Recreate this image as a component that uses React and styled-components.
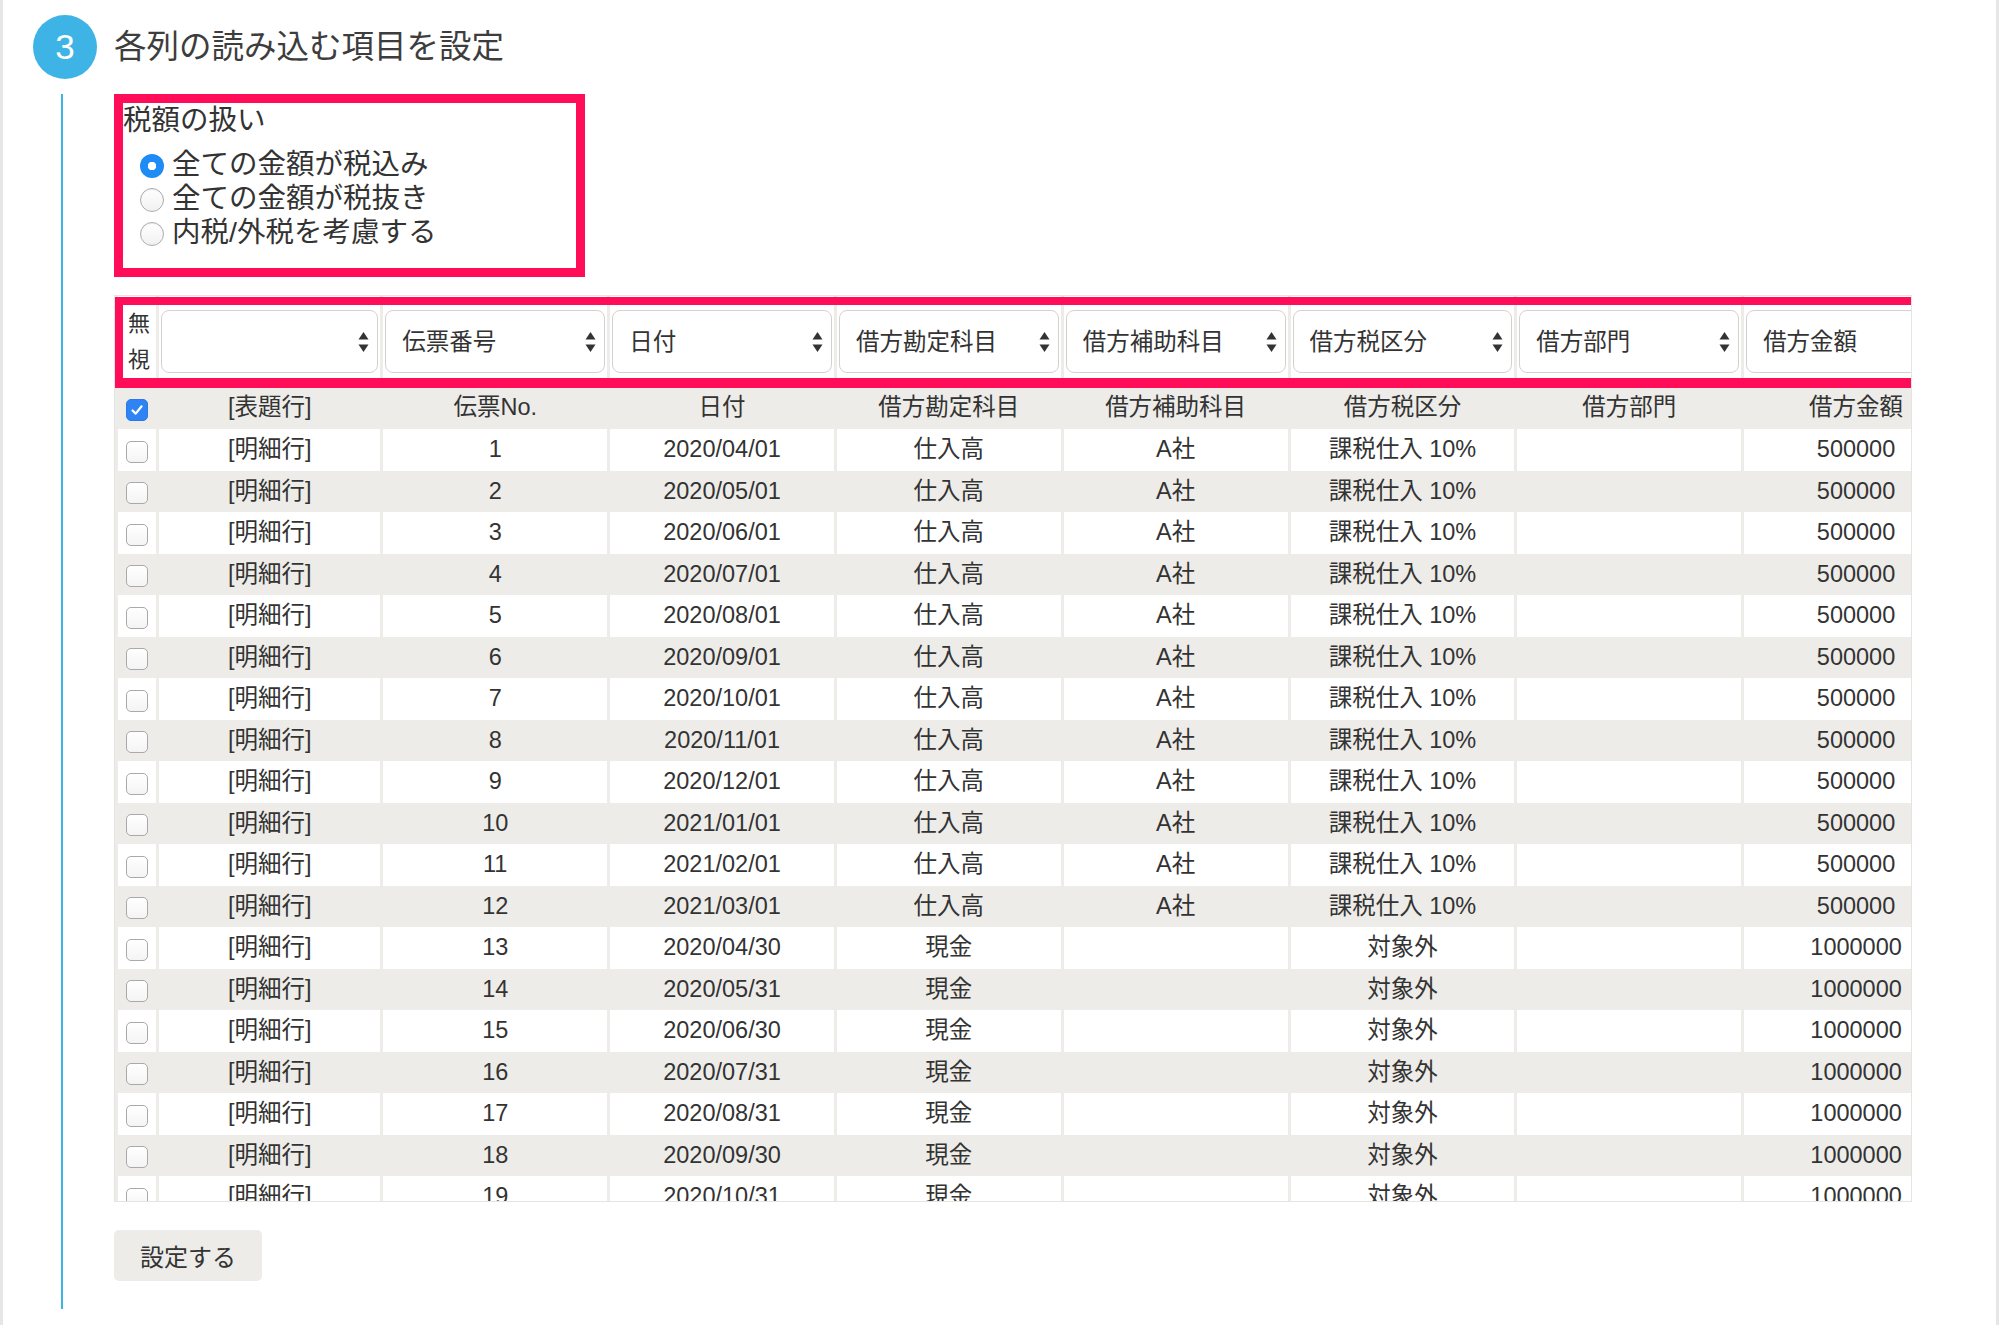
import React from 'react'
import styled, { createGlobalStyle } from 'styled-components'

const FONT = `"Liberation Sans", "Noto Sans CJK JP", sans-serif`

const GlobalStyle = createGlobalStyle`
	html, body {
		margin: 0;
		padding: 0;
		background: #fff;
	}
	body {
		font-family: ${FONT};
		color: #333;
	}
	* {
		box-sizing: border-box;
	}
`

// data
const fields = ['', '伝票番号', '日付', '借方勘定科目', '借方補助科目', '借方税区分', '借方部門', '借方金額']
const headers = ['[表題行]', '伝票No.', '日付', '借方勘定科目', '借方補助科目', '借方税区分', '借方部門', '借方金額']

const purchaseDates = [
	'2020/04/01', '2020/05/01', '2020/06/01', '2020/07/01', '2020/08/01', '2020/09/01',
	'2020/10/01', '2020/11/01', '2020/12/01', '2021/01/01', '2021/02/01', '2021/03/01'
]
const cashDates = ['2020/04/30', '2020/05/31', '2020/06/30', '2020/07/31', '2020/08/31', '2020/09/30', '2020/10/31']

const rows = [
	...purchaseDates.map((date, i) => ({
		no: i + 1, date, account: '仕入高', sub: 'A社', tax: '課税仕入 10%', dept: '', amount: '500000'
	})),
	...cashDates.map((date, i) => ({
		no: i + 13, date, account: '現金', sub: '', tax: '対象外', dept: '', amount: '1000000'
	}))
]

const taxOptions = ['全ての金額が税込み', '全ての金額が税抜き', '内税/外税を考慮する']

const Checkbox = ({ checked }) => (
	<CheckBox role='checkbox' aria-checked={checked} $checked={checked}>
		{checked && (
			<svg width='16' height='16' viewBox='0 0 16 16'>
				<path d='M3.5 8.5 L6.7 11.6 L12.6 4.3' fill='none' stroke='#fff' strokeWidth='2.2' strokeLinecap='round' strokeLinejoin='round'/>
			</svg>
		)}
	</CheckBox>
)

const FieldSelect = ({ value }) => (
	<SelectWrap>
		<Select defaultValue={value}>
			{fields.map(f => <option key={f} value={f}>{f}</option>)}
		</Select>
		<Arrow width='11' height='22' viewBox='0 0 11 22'>
			<path d='M5.5 1 L10.5 8.5 L0.5 8.5 Z' fill='#333'/>
			<path d='M5.5 21 L10.5 13.5 L0.5 13.5 Z' fill='#333'/>
		</Arrow>
	</SelectWrap>
)

export default function App () {
	return (
		<Page>
			<GlobalStyle/>
			<StepHeader>
				<StepNumber>3</StepNumber>
				<StepTitle>各列の読み込む項目を設定</StepTitle>
			</StepHeader>
			<StepBody>
				<TaxBox>
					<TaxHeading>税額の扱い</TaxHeading>
					<RadioList>
						{taxOptions.map((label, i) => (
							<RadioRow key={label}>
								<Radio $checked={i === 0}/>
								<span>{label}</span>
							</RadioRow>
						))}
					</RadioList>
				</TaxBox>

				<TableFrame>
					<Scroller>
						<Table>
							<colgroup>
								<Col $w={38}/>
								<Col $w={221}/>
								{headers.slice(1).map(h => <Col key={h} $w={223.5}/>)}
							</colgroup>
							<thead>
								<tr>
									<IgnoreCell>無<br/>視</IgnoreCell>
									{fields.map((f, i) => (
										<SelectCell key={i}>
											<FieldSelect value={f}/>
										</SelectCell>
									))}
								</tr>
								<HeadRow>
									<CheckCell><Checkbox checked/></CheckCell>
									{headers.map(h => <Cell key={h}>{h}</Cell>)}
								</HeadRow>
							</thead>
							<tbody>
								{rows.map((r, i) => (
									<BodyRow key={r.no} $white={i % 2 === 0}>
										<CheckCell><Checkbox checked={false}/></CheckCell>
										<Cell>[明細行]</Cell>
										<Cell>{r.no}</Cell>
										<Cell>{r.date}</Cell>
										<Cell>{r.account}</Cell>
										<Cell>{r.sub}</Cell>
										<Cell>{r.tax}</Cell>
										<Cell>{r.dept}</Cell>
										<Cell>{r.amount}</Cell>
									</BodyRow>
								))}
							</tbody>
						</Table>
					</Scroller>
					<Highlight/>
				</TableFrame>

				<SubmitButton type='button'>設定する</SubmitButton>
			</StepBody>
		</Page>
	)
}

const Page = styled.div`
	min-height: 1325px;
	border-left: 3px solid #e6e6e4;
	border-right: 3px solid #e6e6e4;
	padding: 15px 0 0 30px;
`

const StepHeader = styled.div`
	display: flex;
	align-items: center;
	gap: 17px;
	height: 64px;
`

const StepNumber = styled.div`
	width: 64px;
	height: 64px;
	border-radius: 50%;
	background: #3db4e5;
	color: #fff;
	font-size: 35px;
	display: flex;
	align-items: center;
	justify-content: center;
`

const StepTitle = styled.h2`
	margin: 0;
	font-size: 32.5px;
	font-weight: normal;
	color: #3d3d3d;
	line-height: 40px;
`

const StepBody = styled.div`
	margin: 15px 0 0 28px;
	border-left: 2px solid #3db4e5;
	padding: 0 0 28px 51px;
`

const TaxBox = styled.div`
	width: 471px;
	height: 183px;
	border: 9px solid #ff0d58;
	font-size: 28.5px;
	color: #333;
`

const TaxHeading = styled.div`
	line-height: 34px;
`

const RadioList = styled.div`
	margin-top: 10px;
	padding-left: 17px;
`

const RadioRow = styled.label`
	display: flex;
	align-items: center;
	gap: 8px;
	height: 34px;
	line-height: 34px;
`

const Radio = styled.span`
	width: 24px;
	height: 24px;
	border-radius: 50%;
	flex: none;
	margin-top: 4px;
	${p => p.$checked ? `
		background: radial-gradient(circle, #fff 0 4px, #1f8bf5 4.5px);
	` : `
		border: 1px solid #adadad;
		background: linear-gradient(#fff, #f1f1f1);
		box-shadow: inset 0 1px 1px rgba(0,0,0,0.08);
	`}
`

const TableFrame = styled.div`
	position: relative;
	margin-top: 18px;
	width: 1798px;
`

const Scroller = styled.div`
	height: 907px;
	border: 1px solid #e4e4e0;
	overflow: hidden;
`

const Table = styled.table`
	table-layout: fixed;
	width: 1856px;
	border-collapse: separate;
	border-spacing: 3px 0;
	background: #edece8;
	font-size: 23.5px;
	color: #333;
`

const Col = styled.col`
	width: ${p => p.$w}px;
`

const IgnoreCell = styled.td`
	background: #fff;
	font-size: 22px;
	line-height: 36px;
	padding: 0 0 0 10px;
	height: 91px;
	vertical-align: middle;
`

const SelectCell = styled.td`
	background: #fff;
	padding: 14px 2px;
`

const SelectWrap = styled.div`
	position: relative;
	height: 63px;
`

const Select = styled.select`
	appearance: none;
	width: 100%;
	height: 63px;
	border: 1px solid #d2d2d2;
	border-radius: 8px;
	background: #fff;
	padding: 0 30px 0 16px;
	font-family: ${FONT};
	font-size: 23.5px;
	color: #333;
	outline: none;
`

const Arrow = styled.svg`
	position: absolute;
	right: 9px;
	top: 50%;
	transform: translateY(-50%);
	pointer-events: none;
`

const HeadRow = styled.tr`
	height: 42px;
`

const BodyRow = styled.tr`
	height: 41.5px;
	td {
		background: ${p => p.$white ? '#fff' : 'transparent'};
	}
`

const Cell = styled.td`
	padding: 0 4px;
	text-align: center;
	vertical-align: middle;
	line-height: 1;
	white-space: nowrap;
`

const CheckCell = styled.td`
	padding: 0;
	vertical-align: middle;
`

const CheckBox = styled.span`
	display: flex;
	align-items: center;
	justify-content: center;
	width: 22px;
	height: 22px;
	margin: 4px auto 0;
	border-radius: 5px;
	${p => p.$checked ? `
		background: #2e84f4;
		border: 1px solid #2a7ae6;
	` : `
		background: linear-gradient(#fff, #f4f4f4);
		border: 1px solid #a9a9a9;
	`}
`

const Highlight = styled.div`
	position: absolute;
	top: 2px;
	left: 1px;
	right: 1px;
	height: 91px;
	border: 8px solid #ff0d58;
	border-bottom-width: 10px;
	border-right: none;
	pointer-events: none;
`

const SubmitButton = styled.button`
	display: block;
	margin-top: 28px;
	width: 148px;
	height: 51px;
	border: none;
	border-radius: 5px;
	background: #edece8;
	font-family: ${FONT};
	font-size: 24px;
	color: #333;
`
